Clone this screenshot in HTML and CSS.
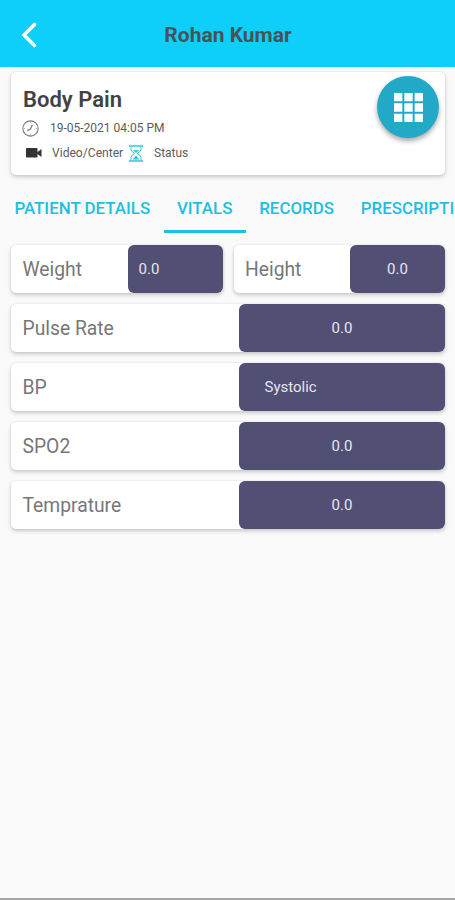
FILE: index.html
```html
<!DOCTYPE html>
<html lang="en">
<head>
<meta charset="utf-8">
<title>Rohan Kumar</title>
<link rel="stylesheet" href="styles.css">
</head>
<body>
<header class="bar">
  <svg class="back" width="20" height="28" viewBox="0 0 20 28"><path d="M14.500 3.500 4 14l10.500 10.500" fill="none" stroke="#fff" stroke-width="3.600" stroke-linecap="round" stroke-linejoin="miter"/></svg>
  <h1 class="name"><span>Rohan Kumar</span></h1>
</header>
<section class="card visit">
  <h2 class="complaint"><span>Body Pain</span></h2>
  <div class="meta date">
    <svg class="clock" width="17" height="17" viewBox="0 0 16 16" fill="none" stroke="#777"><circle cx="8" cy="8" r="7.200" stroke-width="1"/><path d="M9.800 4.500 8 8.500 5 10" stroke-width="1.100"/><path d="M8 2v1M8 13v1M2 8h1M13 8h1" stroke-width=".8" stroke="#999"/></svg>
    <span class="date-text">19-05-2021 04:05 PM</span>
  </div>
  <div class="meta kind">
    <svg class="camera" width="16" height="10" viewBox="0 0 16 10" fill="#333"><rect x="0" y="0" width="11.500" height="9.500" rx=".8"/><path d="M11 4.500 15.500 1v8L11 5.800z"/></svg>
    <span class="kind-text">Video/Center</span>
    <svg class="glass" width="14" height="17" viewBox="0 0 14 17" fill="none" stroke="#35c3dc"><path d="M0 1h14M0 16h14" stroke-width="1.500"/><path d="M2 1.500v3Q2 6.500 5.700 8.500 2 10.500 2 12.500v3M12 1.500v3q0 2-3.700 4 3.700 2 3.700 4v3" stroke-width="1"/><path d="M4 5h6L7 8zM7 10.500l3.500 4h-7z" fill="#35c3dc" stroke="none"/></svg>
    <span class="status-text">Status</span>
  </div>
  <button class="menu" aria-label="Menu">
    <svg width="29" height="29" viewBox="0 0 29.500 29.500" fill="#fff"><path d="M0 0h8.500v8.500H0zM10.500 0H19v8.500h-8.500zM21 0h8.500v8.500H21zM0 10.500h8.500V19H0zM10.500 10.500H19V19h-8.500zM21 10.500h8.500V19H21zM0 21h8.500v8.500H0zM10.500 21H19v8.500h-8.500zM21 21h8.500v8.500H21z"/></svg>
  </button>
</section>
<nav class="tabs">
  <a class="tab">PATIENT DETAILS</a>
  <a class="tab active">VITALS</a>
  <a class="tab">RECORDS</a>
  <a class="tab">PRESCRIPTION</a>
</nav>
<main class="vitals">
  <div class="pair">
    <div class="card row"><span class="label">Weight</span><span class="value start">0.0</span></div>
    <div class="card row"><span class="label">Height</span><span class="value">0.0</span></div>
  </div>
  <div class="card row wide"><span class="label">Pulse Rate</span><span class="value">0.0</span></div>
  <div class="card row wide"><span class="label">BP</span><span class="value systolic">Systolic</span></div>
  <div class="card row wide"><span class="label">SPO2</span><span class="value">0.0</span></div>
  <div class="card row wide"><span class="label">Temprature</span><span class="value">0.0</span></div>
</main>
</body>
</html>
```
FILE: styles.css
```css
* { box-sizing: border-box; }
body {
  margin: 0;
  height: 900px;
  overflow: hidden;
  background: #fafafa;
  border-bottom: 2px solid #a5a5a5;
  font-family: Roboto, "Liberation Sans", sans-serif;
}
.bar {
  height: 67px;
  background: #0dcffa;
  display: grid;
  grid-template-columns: 20px 1fr 20px;
  align-items: center;
  padding: 2px 19px 0 20px;
}
.name { margin: 0; font-size: 21px; font-weight: 700; line-height: 24px; color: #465359; text-align: center; }
.card {
  background: #fff;
  border-radius: 5px;
  box-shadow: 0 2px 4px rgba(0, 0, 0, .2), 0 0 2px rgba(0, 0, 0, .08);
}
.visit { position: relative; height: 103px; margin: 5px 10px 0 11px; padding: 15px 12px 0; }
.complaint { margin: 0; font-size: 22px; font-weight: 600; line-height: 26px; color: #424242; }
.meta { display: flex; align-items: center; font-size: 12px; color: #5c5c5c; }
.date { height: 16px; margin-top: 7px; margin-left: -1px; }
.date-text { margin-left: 11px; }
.kind { height: 18px; margin-top: 8px; padding-left: 3px; }
.kind-text { margin-left: 10px; width: 77px; font-size: 12.100px; }
.status-text { margin-left: 11px; }
.menu {
  position: absolute;
  top: 4px;
  right: 6px;
  width: 62px;
  height: 62px;
  padding: 0;
  border: 0;
  border-radius: 50%;
  background: #22a9c7;
  box-shadow: 0 3px 5px rgba(0, 0, 0, .35);
  display: flex;
  align-items: center;
  justify-content: center;
}
.tabs { display: flex; height: 57px; margin-top: 1px; padding-left: 1px; overflow: hidden; white-space: nowrap; }
.tab {
  flex: none;
  padding: 0 13.400px;
  height: 57px;
  line-height: 64px;
  font-size: 16.900px;
  font-weight: 500;
  color: #1fc0df;
}
.active { border-bottom: 3px solid #1fc0df; }
.vitals { margin: 12px 10px 0 11px; display: grid; gap: 11px; }
.pair { display: grid; grid-template-columns: 1fr 1fr; gap: 11px; }
.row { display: flex; height: 48px; align-items: center; justify-content: space-between; }
.label { padding: 1px 0 0 11.500px; font-size: 19.300px; color: #777; }
.value {
  width: 95px;
  height: 48px;
  border-radius: 6px;
  background: #514f73;
  color: #e6e5f2;
  font-size: 15px;
  display: flex;
  align-items: center;
  justify-content: center;
}
.wide .value { width: 206px; }
.value.start { justify-content: flex-start; padding-left: 11px; }
.value.systolic { justify-content: flex-start; padding-left: 25.500px; }
```
